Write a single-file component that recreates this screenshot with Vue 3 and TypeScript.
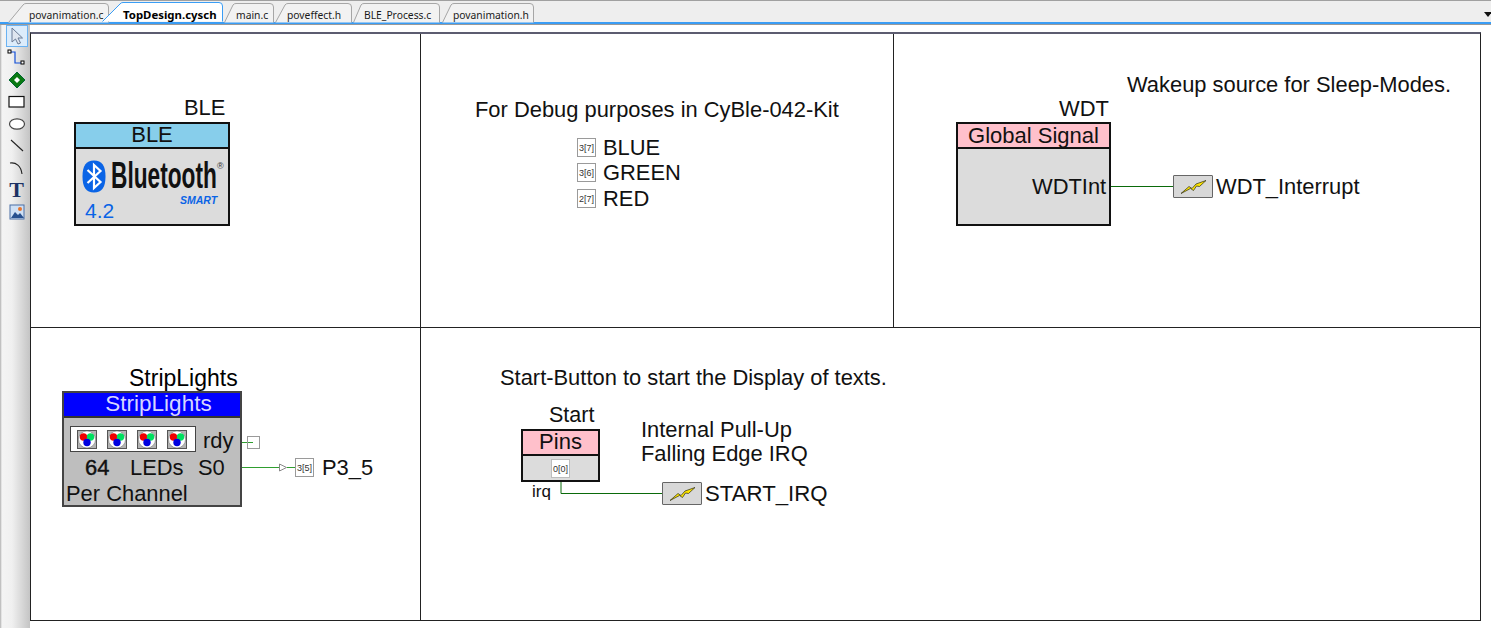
<template>
  <div class="app">
    <div class="tabs">
      <div
        v-for="tab in tabs"
        :key="tab.name"
        class="tab"
        :class="{ active: tab.active }"
        :style="{ left: tab.x + 'px', width: tab.w + 'px' }"
      >
        <svg class="tab-shape" :width="tab.w" height="20">
          <path :d="tabPath(tab)" />
        </svg>
        <span class="tab-name" :style="{ left: tab.tx + 'px' }">{{ tab.name }}</span>
      </div>
      <div class="tabs-arrow"></div>
    </div>

    <div class="main">
      <div class="toolbar">
        <div class="tool selected">
          <svg width="16" height="18" viewBox="0 0 16 18"><path d="M3 1v14l3.5-3 2.5 5 2.5-1-2.5-5h4.500z" fill="#dfe6f0" stroke="#6b7b95" stroke-width="1" /></svg>
        </div>
        <div class="tool">
          <svg width="20" height="18" viewBox="0 0 20 18"><path d="M3 3h5v11h6" fill="none" stroke="#1450d8" stroke-width="1.200" /><rect x="1" y="1" width="3" height="3" fill="#fff" stroke="#000" /><rect x="14" y="12" width="3" height="3" fill="#fff" stroke="#000" /></svg>
        </div>
        <div class="tool">
          <svg width="18" height="18" viewBox="0 0 18 18"><path d="M9 1l8 8-8 8-8-8z" fill="#0a7a12" stroke="#063" /><path d="M9 6l3 3-3 3-3-3z" fill="#fff" /></svg>
        </div>
        <div class="tool">
          <svg width="18" height="14" viewBox="0 0 18 14"><rect x="1" y="1.500" width="15" height="10.500" fill="#fff" stroke="#111" stroke-width="1.200" /></svg>
        </div>
        <div class="tool">
          <svg width="18" height="14" viewBox="0 0 18 14"><ellipse cx="9" cy="7" rx="7.500" ry="5.200" fill="#fff" stroke="#444" stroke-width="1.200" /></svg>
        </div>
        <div class="tool">
          <svg width="18" height="16" viewBox="0 0 18 16"><path d="M3 2l12 11" stroke="#222" stroke-width="1.100" /></svg>
        </div>
        <div class="tool">
          <svg width="18" height="16" viewBox="0 0 18 16"><path d="M2 3c6-1 11 3 12 11" fill="none" stroke="#222" stroke-width="1.100" /></svg>
        </div>
        <div class="tool tool-t">T</div>
        <div class="tool">
          <svg width="16" height="16" viewBox="0 0 16 16">
            <rect x="1" y="1" width="14" height="14" fill="#cfe0f5" stroke="#4a6fa5" />
            <circle cx="11" cy="5" r="2" fill="#e8742a" />
            <path d="M2 14l4-6 3 3 2-2 4 5z" fill="#27508f" />
          </svg>
        </div>
      </div>

      <div class="sheet">
        <div class="frame">
          <div class="cell"></div>
          <div class="cell"></div>
          <div class="cell last"></div>
          <div class="cell"></div>
          <div class="cell wide last"></div>
        </div>
      </div>
    </div>

    <!-- schematic parts sit on a free canvas, page coordinates -->
    <svg class="wires" width="1491" height="628">
      <path d="M1110 186.500H1173" class="wire" />
      <path d="M241 442.500H253" class="wire light" />
      <path d="M241 467.500H279M287 467.500H295" class="wire light" />
      <path d="M279.500 464l7 3.500-7 3.500z" fill="#fff" stroke="#888" />
      <path d="M561 481V493.500H662" class="wire" />
    </svg>

    <div class="block ble">
      <div class="block-head">BLE</div>
      <div class="block-body">
        <svg class="bt-badge" width="24" height="33" viewBox="0 0 24 33">
          <path d="M12 0.500C20 0.500 23.500 6 23.500 16.500S20 32.500 12 32.500 0.500 27 0.500 16.500 4 0.500 12 0.500z" fill="#0a64e6" />
          <path d="M5.500 10l13 12-6.500 6V5l6.500 6-13 12" fill="none" stroke="#fff" stroke-width="2.200" />
        </svg>
        <span class="bt-word">Bluetooth</span>
        <span class="bt-reg">®</span>
        <span class="bt-smart">SMART</span>
        <span class="bt-ver">4.2</span>
      </div>
    </div>

    <div class="block strip">
      <div class="block-head">StripLights</div>
      <div class="block-body">
        <div class="leds">
          <svg v-for="n in 4" :key="n" width="20" height="19" viewBox="0 0 20 19">
            <rect x="0.500" y="0.500" width="19" height="18" fill="#b4b4b4" stroke="#555" />
            <circle cx="10" cy="9.500" r="8.500" fill="#fff" stroke="#666" stroke-width="0.500" />
            <circle cx="6.500" cy="7" r="3.700" fill="#f00000" />
            <circle cx="13.500" cy="7" r="3.700" fill="#00e060" />
            <circle cx="10" cy="12.500" r="3.700" fill="#0000e0" />
          </svg>
        </div>
      </div>
    </div>

    <div class="block pins">
      <div class="block-head">Pins</div>
      <div class="block-body">
        <div class="port inner">0[0]</div>
      </div>
    </div>

    <div class="block wdt">
      <div class="block-head">Global Signal</div>
      <div class="block-body"></div>
    </div>

    <div v-for="p in ports" :key="p.label" class="port" :style="{ left: p.x + 'px', top: p.y + 'px' }">{{ p.label }}</div>
    <div class="port empty"></div>

    <div v-for="irq in irqs" :key="irq.x" class="irq" :style="{ left: irq.x + 'px', top: irq.y + 'px' }">
      <svg width="27" height="14" viewBox="0 0 27 14">
        <path d="M1 13.500L9 6.500 12 8.500 16 4 26 0.500 19.500 6.500 16.500 6 13.500 10.500 10.500 8.500z" fill="#ffe600" stroke="#2a2a10" stroke-width="0.700" />
      </svg>
    </div>

    <span
      v-for="t in labels"
      :key="t.text"
      class="label"
      :class="t.cls"
      :style="{ left: t.x + 'px', top: t.y - 12 + 'px' }"
    >{{ t.text }}</span>
  </div>
</template>

<script setup lang="ts">
interface Tab {
  name: string
  x: number
  w: number
  tx: number
  slant: number
  active?: boolean
}

const tabs: Tab[] = [
  { name: 'povanimation.c', x: 8, w: 102, tx: 21, slant: 15 },
  { name: 'main.c', x: 224, w: 51, tx: 12, slant: 9 },
  { name: 'poveffect.h', x: 275, w: 78, tx: 12, slant: 10 },
  { name: 'BLE_Process.c', x: 353, w: 88, tx: 11, slant: 8 },
  { name: 'povanimation.h', x: 442, w: 93, tx: 11, slant: 9 },
  { name: 'TopDesign.cysch', x: 102, w: 122, tx: 21, slant: 18, active: true },
]

const tabPath = (t: Tab) =>
  `M0.5 19.5 L${t.slant} 2 Q${t.slant + 1} 0.5 ${t.slant + 3} 0.5 H${t.w - 5} Q${t.w - 1.5} 0.5 ${t.w - 1.5} 4 V19.5`

const ports = [
  { label: '3[7]', x: 577, y: 138 },
  { label: '3[6]', x: 577, y: 163 },
  { label: '2[7]', x: 577, y: 189 },
  { label: '3[5]', x: 295, y: 458 },
]

const irqs = [
  { x: 1173, y: 175 },
  { x: 662, y: 482 },
]

const labels = [
  { text: 'BLE', x: 184, y: 107 },
  { text: 'For Debug purposes in CyBle-042-Kit', x: 475, y: 109 },
  { text: 'BLUE', x: 603, y: 147 },
  { text: 'GREEN', x: 603, y: 172 },
  { text: 'RED', x: 603, y: 198 },
  { text: 'Wakeup source for Sleep-Modes.', x: 1127, y: 84 },
  { text: 'WDT', x: 1059, y: 108 },
  { text: 'WDTInt', x: 1032, y: 186 },
  { text: 'WDT_Interrupt', x: 1216, y: 186 },
  { text: 'StripLights', x: 129, y: 377, cls: 'wide-text' },
  { text: 'rdy', x: 203, y: 440 },
  { text: '64', x: 85, y: 467, cls: 'dark' },
  { text: 'LEDs', x: 130, y: 467 },
  { text: 'S0', x: 198, y: 467 },
  { text: 'Per Channel', x: 66, y: 493 },
  { text: 'P3_5', x: 322, y: 467 },
  { text: 'Start-Button to start the Display of texts.', x: 500, y: 377 },
  { text: 'Start', x: 549, y: 414, cls: 'mid' },
  { text: 'Internal Pull-Up', x: 641, y: 429 },
  { text: 'Falling Edge IRQ', x: 641, y: 453 },
  { text: 'irq', x: 532, y: 491, cls: 'small' },
  { text: 'START_IRQ', x: 705, y: 493, cls: 'big' },
]
</script>

<style>
html,
body {
  margin: 0;
  background: #fff;
}
</style>

<style scoped>
.app {
  position: relative;
  width: 1491px;
  height: 628px;
  overflow: hidden;
  font-family: "Liberation Sans", Arial, sans-serif;
  background: #fff;
}

.tabs {
  position: relative;
  height: 21px;
  background: #eeeeee;
  border-top: 1px solid #a0a0a0;
  border-bottom: 2px solid #3a9df5;
  box-sizing: content-box;
  box-shadow: 0 1px 0 #9a9a9a;
}

.tab {
  position: absolute;
  top: 3px;
  height: 18px;
}

.tab-shape {
  position: absolute;
  left: 0;
  top: -1px;
  overflow: visible;
}

.tab-shape path {
  fill: #f2f2f2;
  stroke: #a6a6a6;
  stroke-width: 1;
}

.tab.active .tab-shape path {
  fill: #fff;
  stroke: #3a9df5;
}

.tab.active {
  top: 2px;
  height: 20px;
}

.tab-name {
  position: absolute;
  top: 3px;
  font-family: "Noto Sans", sans-serif;
  font-size: 10.300px;
  line-height: 16px;
  color: #1a1a1a;
  white-space: nowrap;
}

.tab.active .tab-name {
  top: 4px;
  font-size: 11.400px;
  font-weight: 700;
  color: #000;
}

.tabs-arrow {
  position: absolute;
  right: 0;
  top: 11px;
  width: 0;
  height: 0;
  border-left: 4px solid transparent;
  border-right: 4px solid transparent;
  border-top: 5px solid #111;
  margin-right: -1px;
}

.main {
  display: flex;
  height: 604px;
}

.toolbar {
  width: 30px;
  flex: none;
  display: flex;
  flex-direction: column;
  align-items: center;
  padding: 1px 3px 0 6px;
  box-sizing: border-box;
  background: linear-gradient(90deg, #b0b0b0 0, #f4f4f4 2px, #f0f0f0 12px, #c4c4c4 100%);
}

.tool {
  width: 22px;
  height: 22px;
  flex: none;
  display: flex;
  align-items: center;
  justify-content: center;
  box-sizing: border-box;
}

.tool.selected {
  background: #dcecfb;
  border: 1px solid #6ab2f2;
}

.tool-t {
  font-family: "Liberation Serif", serif;
  font-size: 22px;
  font-weight: 700;
  color: #1c3264;
}

.sheet {
  flex: 1;
  padding-top: 8px;
  background: #fff;
}

.frame {
  display: grid;
  grid-template-columns: 390px 473px 586px;
  grid-template-rows: 294px 293px;
  width: 1449px;
  box-sizing: content-box;
  border-top: 2px solid #5c5c70;
  border-left: 1px solid #222;
  border-right: 1px solid #222;
}

.cell {
  box-sizing: border-box;
  border-right: 1px solid #222;
  border-bottom: 1px solid #222;
}

.cell.last {
  border-right: none;
}

.cell.wide {
  grid-column: span 2;
}

.wires {
  position: absolute;
  left: 0;
  top: 0;
}

.wire {
  fill: none;
  stroke: #0a6a0a;
  stroke-width: 1;
}

.wire.light {
  stroke: #2f9e2f;
}

.block {
  position: absolute;
  box-sizing: border-box;
  display: flex;
  flex-direction: column;
  border: 2px solid #111;
}

.block-head {
  height: 25px;
  flex: none;
  box-sizing: border-box;
  border-bottom: 2px solid #111;
  text-align: center;
  font-size: 22px;
  line-height: 21px;
  color: #111;
}

.block-body {
  flex: 1;
  position: relative;
  background: #dcdcdc;
}

.ble {
  left: 74px;
  top: 122px;
  width: 156px;
  height: 104px;
}

.ble .block-head {
  background: #87ceeb;
}

.bt-badge {
  position: absolute;
  left: 6px;
  top: 11px;
}

.bt-word {
  position: absolute;
  left: 35px;
  top: 8px;
  font-size: 36px;
  line-height: 38px;
  font-weight: 700;
  color: #111;
  transform: scaleX(0.63);
  transform-origin: left center;
  white-space: nowrap;
}

.bt-reg {
  position: absolute;
  left: 141px;
  top: 13px;
  font-size: 9px;
  line-height: 9px;
  color: #333;
}

.bt-smart {
  position: absolute;
  left: 104px;
  top: 44px;
  font-size: 10.500px;
  line-height: 15px;
  font-weight: 700;
  font-style: italic;
  color: #0a64e6;
}

.bt-ver {
  position: absolute;
  left: 9px;
  top: 50px;
  font-size: 21px;
  line-height: 24px;
  color: #0a64e6;
}

.strip {
  left: 62px;
  top: 391px;
  width: 180px;
  height: 116px;
  border-color: #444;
}

.strip .block-head {
  background: #0000ff;
  color: #d6d6ff;
  border-bottom-color: #333;
  font-size: 22.500px;
  padding-left: 13px;
}

.strip .block-body {
  background: #bebebe;
}

.leds {
  position: absolute;
  left: 6px;
  top: 8px;
  width: 126px;
  height: 26px;
  box-sizing: border-box;
  display: flex;
  align-items: center;
  gap: 10px;
  padding-left: 6px;
  background: #fff;
  border: 1px solid #444;
}

.pins {
  left: 521px;
  top: 429px;
  width: 79px;
  height: 53px;
}

.pins .block-head {
  background: #ffc0cb;
  line-height: 22px;
}

.wdt {
  left: 956px;
  top: 122px;
  width: 155px;
  height: 104px;
}

.wdt .block-head {
  background: #ffc0cb;
  line-height: 23px;
}

.port {
  position: absolute;
  width: 19px;
  height: 19px;
  box-sizing: border-box;
  display: flex;
  align-items: center;
  justify-content: center;
  background: #fff;
  border: 1px solid #9a9a9a;
  font-size: 9px;
  color: #333;
}

.port.inner {
  left: 28px;
  top: 3px;
  border-color: #bdbdbd;
}

.port.empty {
  left: 247px;
  top: 436px;
  width: 13px;
  height: 13px;
  background: transparent;
}

.irq {
  position: absolute;
  width: 40px;
  height: 23px;
  box-sizing: border-box;
  display: flex;
  align-items: center;
  justify-content: center;
  background: #d8d8d8;
  border: 1px solid #666;
  border-radius: 1px;
}

.label {
  position: absolute;
  font-size: 21.900px;
  line-height: 26px;
  color: #111;
  white-space: nowrap;
}

.label.mid {
  font-size: 21.500px;
}

.label.big {
  font-size: 22.200px;
}

.label.small {
  font-size: 17px;
}

.label.wide-text {
  font-size: 23px;
  color: #000;
}

.label.dark {
  -webkit-text-stroke: 0.4px #111;
}
</style>
